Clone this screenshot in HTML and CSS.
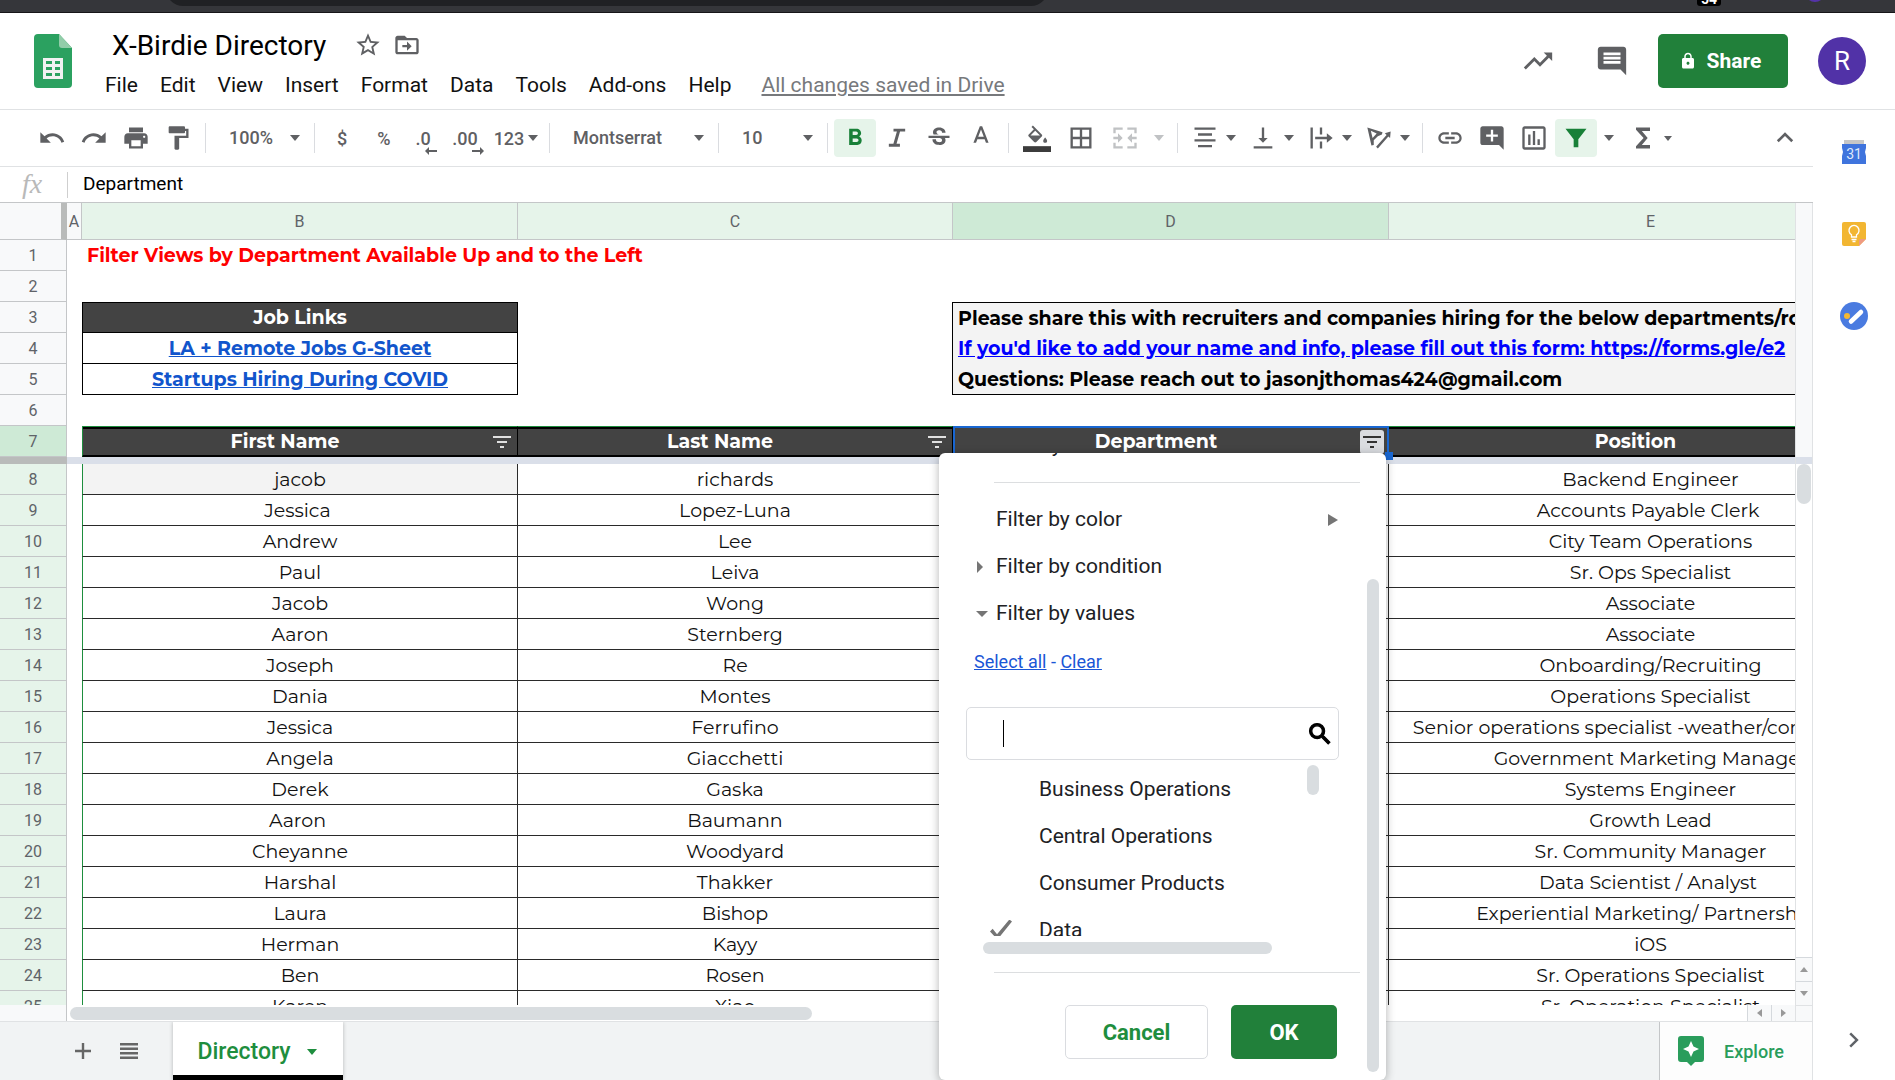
FILE: index.html
```html
<!DOCTYPE html>
<html lang="en">
<head>
    <meta charset="UTF-8">
    <meta name="viewport" content="width=device-width, initial-scale=1.0">
    <title>X-Birdie Directory</title>
    <link rel="stylesheet" href="styles.css">
</head>
<body>
    <div class="browser-strip">
        <div class="omnibox"></div>
        <span class="ext-badge">54</span>
        <span class="profile-dot"></span>
    </div>

    <header>
        <svg class="logo" viewBox="0 0 38 54">
            <path fill="#2ba160" d="M4 0h21l13 14v36a4 4 0 0 1-4 4H4a4 4 0 0 1-4-4V4a4 4 0 0 1 4-4z"/>
            <path fill="#92cda9" d="M25 0l13 14H28a3 3 0 0 1-3-3z"/>
            <path fill="#f1f1f1" fill-rule="evenodd" d="M9 24h20v21H9zM12 27v3h6v-3zM21 27v3h5v-3zM12 33v3h6v-3zM21 33v3h5v-3zM12 39v3h6v-3zM21 39v3h5v-3z"/>
        </svg>
        <div class="doc-info">
            <div class="doc-title">
                <h1>X-Birdie Directory</h1>
                <button aria-label="Star"><svg class="icon-sm" viewBox="0 0 24 24"><path d="M22 9.24l-7.19-.62L12 2 9.19 8.63 2 9.24l5.46 4.73L5.82 21 12 17.27 18.18 21l-1.63-7.03L22 9.24zM12 15.4l-3.76 2.27 1-4.28-3.32-2.88 4.38-.38L12 6.1l1.71 4.04 4.38.38-3.32 2.88 1 4.28L12 15.4z"/></svg></button>
                <button aria-label="Move"><svg class="icon-sm" viewBox="0 0 24 24"><path d="M20 6h-8l-2-2H4c-1.100 0-2 .9-2 2v12c0 1.100.9 2 2 2h16c1.100 0 2-.9 2-2V8c0-1.100-.9-2-2-2zm0 12H4V8h16v10zM12 12H8v2h4v3l4-4-4-4z"/></svg></button>
            </div>
            <div class="menu">
                <a href="#">File</a>
                <a href="#">Edit</a>
                <a href="#">View</a>
                <a href="#">Insert</a>
                <a href="#">Format</a>
                <a href="#">Data</a>
                <a href="#">Tools</a>
                <a href="#">Add-ons</a>
                <a href="#">Help</a>
                <a href="#" class="saved">All changes saved in Drive</a>
            </div>
        </div>
        <div class="header-actions">
            <button aria-label="Activity"><svg class="icon-lg" viewBox="0 0 24 24"><path d="M16 6l2.290 2.290-4.880 4.880-4-4L2 16.590 3.410 18l6-6 4 4 6.300-6.290L22 12V6z"/></svg></button>
            <button aria-label="Comments"><svg class="icon-lg" viewBox="0 0 24 24"><path d="M21.990 4c0-1.100-.890-2-1.990-2H4c-1.100 0-2 .9-2 2v12c0 1.100.9 2 2 2h14l4 4-.010-18zM18 14H6v-2h12v2zm0-3H6V9h12v2zm0-3H6V6h12v2z"/></svg></button>
            <button class="share">
                <svg viewBox="0 0 24 24"><path d="M18 8h-1V6c0-2.760-2.240-5-5-5S7 3.240 7 6v2H6c-1.100 0-2 .9-2 2v10c0 1.100.9 2 2 2h12c1.100 0 2-.9 2-2V10c0-1.100-.9-2-2-2zm-6 9c-1.100 0-2-.9-2-2s.9-2 2-2 2 .9 2 2-.9 2-2 2zm3-9H9V6c0-1.700 1.300-3 3-3s3 1.300 3 3v2z"/></svg>
                Share
            </button>
            <button class="avatar">R</button>
        </div>
    </header>

    <div class="main">
        <div class="editor">
            <div class="toolbar">
                <button class="tool" aria-label="Undo"><svg viewBox="0 0 24 24"><path d="M12.500 8c-2.650 0-5.050.990-6.900 2.600L2 7v9h9l-3.620-3.620c1.390-1.160 3.160-1.880 5.120-1.880 3.540 0 6.550 2.310 7.600 5.500l2.370-.780C21.080 11.030 17.150 8 12.500 8z"/></svg></button>
                <button class="tool" aria-label="Redo"><svg viewBox="0 0 24 24"><path d="M18.400 10.600C16.550 8.990 14.150 8 11.500 8c-4.650 0-8.580 3.030-9.960 7.220L3.900 16c1.050-3.190 4.050-5.500 7.600-5.500 1.950 0 3.730.720 5.120 1.880L13 16h9V7l-3.600 3.600z"/></svg></button>
                <button class="tool" aria-label="Print"><svg viewBox="0 0 24 24"><path d="M19 8H5c-1.660 0-3 1.340-3 3v6h4v4h12v-4h4v-6c0-1.660-1.340-3-3-3zm-3 11H8v-5h8v5zm3-7c-.550 0-1-.450-1-1s.450-1 1-1 1 .450 1 1-.450 1-1 1zm-1-9H6v4h12V3z"/></svg></button>
                <button class="tool" aria-label="Paint format"><svg viewBox="0 0 24 24"><path d="M18 4V3c0-.550-.450-1-1-1H5c-.550 0-1 .450-1 1v4c0 .550.450 1 1 1h12c.550 0 1-.450 1-1V6h1v4H9v11c0 .550.450 1 1 1h2c.550 0 1-.450 1-1v-9h8V4h-3z"/></svg></button>
                <span class="sep"></span>
                <span class="picker">
                    <select aria-label="Zoom"><option>100%</option></select>
                    <i class="caret"></i>
                </span>
                <span class="sep"></span>
                <button class="tool text">$</button>
                <button class="tool text">%</button>
                <button class="tool text decimal">.0<svg viewBox="0 0 12 8"><path d="M4 0v3h8v2H4v3L0 4z"/></svg></button>
                <button class="tool text decimal">.00<svg viewBox="0 0 12 8"><path d="M8 0v3H0v2h8v3l4-4z"/></svg></button>
                <button class="number-format">123<i class="caret"></i></button>
                <span class="sep"></span>
                <span class="picker font">
                    <select aria-label="Font"><option>Montserrat</option></select>
                    <i class="caret"></i>
                </span>
                <span class="sep"></span>
                <span class="picker">
                    <select aria-label="Font size"><option>10</option></select>
                    <i class="caret"></i>
                </span>
                <span class="sep"></span>
                <button class="tool active" aria-label="Bold"><svg viewBox="0 0 24 24"><path d="M15.600 10.790c.970-.670 1.650-1.770 1.650-2.790 0-2.260-1.750-4-4-4H7v14h7.040c2.090 0 3.710-1.700 3.710-3.790 0-1.520-.860-2.820-2.150-3.420zM10 6.500h3c.830 0 1.500.670 1.500 1.500s-.670 1.500-1.500 1.500h-3v-3zm3.500 9H10v-3h3.500c.830 0 1.500.670 1.500 1.500s-.670 1.500-1.500 1.500z"/></svg></button>
                <button class="tool" aria-label="Italic"><svg viewBox="0 0 24 24"><path d="M9 4v2.500h2.900L8.900 17H5v2.500h9.500V17h-2.900l3-10.500H19V4z"/></svg></button>
                <button class="tool" aria-label="Strikethrough"><svg viewBox="0 0 24 24"><path d="M7.240 8.750c-.260-.480-.390-1.030-.390-1.670 0-.610.130-1.160.4-1.670.260-.5.630-.930 1.110-1.290a5.730 5.730 0 0 1 1.700-.830c.660-.190 1.390-.290 2.180-.290.810 0 1.540.110 2.210.340.660.220 1.230.540 1.690.940.470.4.830.880 1.080 1.430.250.550.380 1.150.380 1.810h-3.010c0-.310-.050-.590-.150-.850-.090-.270-.240-.490-.440-.680-.2-.190-.450-.330-.750-.440-.3-.1-.660-.160-1.060-.160-.390 0-.740.040-1.030.130-.290.090-.530.210-.720.360-.190.160-.340.340-.440.550-.1.210-.150.430-.150.660 0 .480.250.880.740 1.210.380.250.770.480 1.410.700H7.390c-.050-.080-.110-.170-.150-.250zM21 12v-2H3v2h9.620c.180.070.4.140.550.200.370.170.660.340.870.510.210.170.350.360.430.570.070.2.110.430.110.690 0 .230-.050.450-.140.660-.090.2-.230.380-.420.530-.190.150-.420.260-.710.350-.290.080-.630.130-1.010.130-.430 0-.830-.040-1.180-.130s-.660-.230-.910-.420a1.920 1.920 0 0 1-.590-.750c-.140-.310-.250-.760-.250-1.210H6.400c0 .550.080 1.130.240 1.580.160.450.370.850.650 1.210.28.350.6.660.98.920.37.260.78.480 1.220.65.440.17.900.3 1.380.39.480.08.960.13 1.440.13.800 0 1.530-.09 2.180-.28s1.210-.45 1.670-.79c.46-.34.82-.77 1.070-1.270s.38-1.070.38-1.710c0-.6-.1-1.140-.31-1.610-.05-.11-.11-.23-.17-.33H21z"/></svg></button>
                <button class="tool" aria-label="Text color"><svg viewBox="0 0 24 24"><path d="M11 2L5.500 16h2.250l1.120-3h6.250l1.120 3h2.250L13 2h-2zm-1.380 9L12 4.670 14.380 11H9.620z"/></svg></button>
                <span class="sep"></span>
                <button class="tool wide" aria-label="Fill color"><svg viewBox="0 0 24 24"><path transform="translate(2 3) scale(.85)" d="M16.560 6.940L7.620-2 6.210-.590l2.380 2.380-5.150 5.150c-.590.590-.590 1.540 0 2.120l5.500 5.500c.290.290.680.440 1.060.440s.770-.150 1.060-.440l5.500-5.500c.590-.580.590-1.530 0-2.120zM5.210 8L10 3.210 14.790 8H5.210zM20 10s-2 2.170-2 3.500c0 1.100.9 2 2 2s2-.9 2-2c0-1.330-2-3.500-2-3.500z"/><path fill="#3c3c3c" d="M0 19h24v5H0z"/></svg></button>
                <button class="tool wide" aria-label="Borders"><svg viewBox="0 0 24 24"><path d="M3 3v18h18V3H3zm8 16H5v-6h6v6zm0-8H5V5h6v6zm8 8h-6v-6h6v6zm0-8h-6V5h6v6z"/></svg></button>
                <button class="tool wide muted" aria-label="Merge cells"><svg viewBox="0 0 24 24"><path d="M2 3h8v2H4v3H2zM14 3h8v5h-2V5h-6zM2 16h2v3h6v2H2zM20 16h2v5h-8v-2h6zM2 11h4V8l4 4-4 4v-3H2zM22 11h-4V8l-4 4 4 4v-3h4z"/></svg></button>
                <button class="more muted" aria-label="Merge type"><i class="caret"></i></button>
                <span class="sep"></span>
                <button class="split" aria-label="Horizontal align"><svg viewBox="0 0 24 24"><path d="M3 3h18v2H3zM6 8h12v2H6zM3 13h18v2H3zM6 18h12v2H6z"/></svg><i class="caret"></i></button>
                <button class="split" aria-label="Vertical align"><svg viewBox="0 0 24 24"><path d="M16 12h-3V3h-2v9H8l4 4 4-4zM4 19v2h16v-2H4z"/></svg><i class="caret"></i></button>
                <button class="split" aria-label="Text wrapping"><svg viewBox="0 0 24 24"><path d="M3 3h2v18H3zM11 3h2v6h-2zM11 15h2v6h-2zM7 11h10V8l5 4-5 4v-3H7z"/></svg><i class="caret"></i></button>
                <button class="split" aria-label="Text rotation"><svg viewBox="0 0 24 24"><path fill-rule="evenodd" d="M2 3l13 4-.500 2-3.500 1.500-3.500 3.500 0 4-2 .500zM5 5.800L6.500 12 10 8.200zM9.500 19.500L18.500 9.500 17 8l5-1.500-.500 5.500-1.500-1.200L11 21z"/></svg><i class="caret"></i></button>
                <span class="sep"></span>
                <button class="tool" aria-label="Insert link"><svg viewBox="0 0 24 24"><path d="M3.900 12c0-1.710 1.390-3.100 3.100-3.100h4V7H7c-2.760 0-5 2.240-5 5s2.240 5 5 5h4v-1.900H7c-1.710 0-3.100-1.390-3.100-3.100zM8 13h8v-2H8v2zm9-6h-4v1.900h4c1.710 0 3.100 1.390 3.100 3.100s-1.390 3.100-3.100 3.100h-4V17h4c2.760 0 5-2.240 5-5s-2.240-5-5-5z"/></svg></button>
                <button class="tool" aria-label="Insert comment"><svg viewBox="0 0 24 24"><path d="M22 4c0-1.100-.9-2-2-2H4c-1.100 0-2 .9-2 2v12c0 1.100.9 2 2 2h14l4 4V4zm-5 7h-4v4h-2v-4H7V9h4V5h2v4h4v2z"/></svg></button>
                <button class="tool" aria-label="Insert chart"><svg viewBox="0 0 24 24"><path d="M20 2H4c-1.100 0-2 .9-2 2v16c0 1.100.9 2 2 2h16c1.100 0 2-.9 2-2V4c0-1.100-.9-2-2-2zm0 18H4V4h16v16zM7 9h2v9H7zM11 6h2v12h-2zM15 13h2v5h-2z"/></svg></button>
                <button class="tool active" aria-label="Filter"><svg viewBox="0 0 24 24"><path d="M3 4h18l-7 9v7h-4v-7z"/></svg></button>
                <button class="more" aria-label="Filter views"><i class="caret"></i></button>
                <button class="split" aria-label="Functions"><svg viewBox="0 0 24 24"><path d="M18 3H6v2l6.500 7L6 19v2h12v-3h-7l5-6-5-6h7z"/></svg><i class="caret small"></i></button>
                <button class="collapse" aria-label="Hide the menus"><svg viewBox="0 0 24 24"><path d="M12 7l-7 7 1.600 1.600L12 10.200l5.400 5.400L19 14z"/></svg></button>
            </div>

            <div class="formula-bar">
                <label for="formula">fx</label>
                <input id="formula" type="text" value="Department">
            </div>

            <div class="sheet-area">
                <div class="viewport">
                    <table>
                        <colgroup>
                            <col class="col-num"><col class="col-a"><col class="col-b"><col class="col-c"><col class="col-d"><col class="col-e">
                        </colgroup>
                        <thead>
                            <tr class="letters"><th class="corner"></th><th class="plain">A</th><th>B</th><th>C</th><th class="current">D</th><th>E</th></tr>
                        </thead>
                        <tbody class="frozen">
                            <tr><th>1</th><td></td><td class="notice" colspan="4">Filter Views by Department Available Up and to the Left</td></tr>
                            <tr><th>2</th><td></td><td></td><td></td><td></td><td></td></tr>
                            <tr><th>3</th><td></td><td class="links-head">Job Links</td><td class="edge"></td><td class="note first" colspan="2">Please share this with recruiters and companies hiring for the below departments/roles</td></tr>
                            <tr><th>4</th><td></td><td class="link-cell"><a href="#">LA + Remote Jobs G-Sheet</a></td><td class="edge"></td><td class="note" colspan="2"><a href="#">If you'd like to add your name and info, please fill out this form: https://forms.gle/e2</a></td></tr>
                            <tr><th>5</th><td></td><td class="link-cell"><a href="#">Startups Hiring During COVID</a></td><td class="edge"></td><td class="note last" colspan="2">Questions: Please reach out to jasonjthomas424@gmail.com</td></tr>
                            <tr><th>6</th><td></td><td></td><td></td><td></td><td></td></tr>
                            <tr class="titles">
                                <th class="current">7</th><td></td>
                                <td class="first"><div>First Name<button aria-label="Filter first name"><svg viewBox="0 0 18 14"><path d="M0 1h18v2H0zM4 6h10v2H4zM7 11h4v2H7z"/></svg></button></div></td>
                                <td><div>Last Name<button aria-label="Filter last name"><svg viewBox="0 0 18 14"><path d="M0 1h18v2H0zM4 6h10v2H4zM7 11h4v2H7z"/></svg></button></div></td>
                                <td class="selected"><div>Department<button aria-label="Filter department"><svg viewBox="0 0 18 14"><path d="M0 1h18v2H0zM4 6h10v2H4zM7 11h4v2H7z"/></svg></button></div></td>
                                <td><div>Position<button aria-label="Filter position"><svg viewBox="0 0 18 14"><path d="M0 1h18v2H0zM4 6h10v2H4zM7 11h4v2H7z"/></svg></button></div></td>
                            </tr>
                            <tr class="freeze"><th></th><td colspan="5"></td></tr>
                        </tbody>
                        <tbody class="people">
                            <tr><th>8</th><td></td><td class="shaded">jacob</td><td>richards</td><td></td><td>Backend Engineer</td></tr>
                            <tr><th>9</th><td></td><td>Jessica&nbsp;</td><td>Lopez-Luna</td><td></td><td>Accounts Payable Clerk&nbsp;</td></tr>
                            <tr><th>10</th><td></td><td>Andrew</td><td>Lee</td><td></td><td>City Team Operations</td></tr>
                            <tr><th>11</th><td></td><td>Paul</td><td>Leiva</td><td></td><td>Sr. Ops Specialist</td></tr>
                            <tr><th>12</th><td></td><td>Jacob</td><td>Wong</td><td></td><td>Associate</td></tr>
                            <tr><th>13</th><td></td><td>Aaron</td><td>Sternberg</td><td></td><td>Associate</td></tr>
                            <tr><th>14</th><td></td><td>Joseph</td><td>Re</td><td></td><td>Onboarding/Recruiting</td></tr>
                            <tr><th>15</th><td></td><td>Dania</td><td>Montes</td><td></td><td>Operations Specialist</td></tr>
                            <tr><th>16</th><td></td><td>Jessica</td><td>Ferrufino</td><td></td><td>Senior operations specialist -weather/construction</td></tr>
                            <tr><th>17</th><td></td><td>Angela</td><td>Giacchetti</td><td></td><td>Government Marketing Manager</td></tr>
                            <tr><th>18</th><td></td><td>Derek</td><td>Gaska</td><td></td><td>Systems Engineer</td></tr>
                            <tr><th>19</th><td></td><td>Aaron&nbsp;</td><td>Baumann</td><td></td><td>Growth Lead</td></tr>
                            <tr><th>20</th><td></td><td>Cheyanne</td><td>Woodyard</td><td></td><td>Sr. Community Manager</td></tr>
                            <tr><th>21</th><td></td><td>Harshal</td><td>Thakker</td><td></td><td>Data Scientist / Analyst&nbsp;</td></tr>
                            <tr><th>22</th><td></td><td>Laura</td><td>Bishop</td><td></td><td>Experiential Marketing/ Partnerships</td></tr>
                            <tr><th>23</th><td></td><td>Herman</td><td>Kayy</td><td></td><td>iOS</td></tr>
                            <tr><th>24</th><td></td><td>Ben</td><td>Rosen</td><td></td><td>Sr. Operations Specialist</td></tr>
                            <tr><th>25</th><td></td><td>Karen</td><td>Xiao</td><td></td><td>Sr. Operation Specialist</td></tr>
                        </tbody>
                    </table>
                </div>
                <div class="vscroll">
                    <div class="vscroll-frozen"></div>
                    <div class="vthumb"></div>
                    <button aria-label="Scroll up"><i class="arrow up"></i></button>
                    <button aria-label="Scroll down"><i class="arrow down"></i></button>
                </div>
                <div class="hscroll">
                    <div class="hscroll-head"></div>
                    <div class="hthumb"></div>
                    <button aria-label="Scroll left"><i class="arrow left"></i></button>
                    <button aria-label="Scroll right"><i class="arrow right"></i></button>
                </div>
                <div class="scroll-corner"></div>
            </div>

            <div class="tabbar">
                <button class="tab-tool" aria-label="Add sheet"><svg viewBox="0 0 24 24"><path d="M20 13.200h-6.800V20h-2.400v-6.800H4v-2.400h6.800V4h2.400v6.800H20z"/></svg></button>
                <button class="tab-tool" aria-label="All sheets"><svg viewBox="0 0 24 24"><path d="M3 4h18v2.500H3zM3 8.500h18V11H3zM3 13h18v2.500H3zM3 17.500h18V20H3z"/></svg></button>
                <button class="tab">Directory<i class="caret"></i></button>
                <button class="explore">
                    <svg viewBox="0 0 26 30"><path d="M3 0h20a3 3 0 0 1 3 3v20a3 3 0 0 1-3 3h-6l-4 4-4-4H3a3 3 0 0 1-3-3V3a3 3 0 0 1 3-3z"/><path fill="#fff" d="M13 5l2.500 5.500L21 13l-5.500 2.500L13 21l-2.500-5.500L5 13l5.500-2.500z"/></svg>
                    Explore
                </button>
            </div>

            <div class="filter-menu">
                <div class="menu-item cut">Sort by color</div>
                <hr>
                <button class="menu-item submenu">Filter by color<i class="arrow right end"></i></button>
                <button class="menu-item"><i class="arrow right lead"></i>Filter by condition</button>
                <button class="menu-item"><i class="arrow down lead"></i>Filter by values</button>
                <p class="quick"><a href="#">Select all</a> - <a href="#">Clear</a></p>
                <div class="search">
                    <input type="text" aria-label="Search values" autofocus>
                    <span class="cursor"></span>
                    <svg viewBox="0 0 24 24"><path stroke="currentColor" d="M15.500 14h-.790l-.280-.270A6.470 6.470 0 0 0 16 9.500 6.500 6.500 0 1 0 9.500 16c1.610 0 3.090-.590 4.230-1.570l.270.280v.790l5 4.990L20.490 19l-4.990-5zm-6 0C7.010 14 5 11.990 5 9.500S7.010 5 9.500 5 14 7.010 14 9.500 11.990 14 9.500 14z"/></svg>
                </div>
                <div class="values">
                    <div class="value-list">
                        <label><input type="checkbox">Business Operations</label>
                        <label><input type="checkbox">Central Operations</label>
                        <label><input type="checkbox">Consumer Products</label>
                        <label><input type="checkbox" checked>Data</label>
                    </div>
                    <div class="values-thumb"></div>
                </div>
                <div class="values-hthumb"></div>
                <hr>
                <div class="menu-actions">
                    <button class="cancel">Cancel</button>
                    <button class="ok">OK</button>
                </div>
                <div class="menu-thumb"></div>
            </div>
        </div>

        <aside>
            <a href="#" aria-label="Calendar"><svg viewBox="0 0 28 28"><path fill="#c6c6c6" d="M4 2h20v5H4z"/><path fill="#3f74dd" d="M2 6h24v4l-1 4 1 4v8H2v-8l1-4-1-4z"/><text x="14" y="21" text-anchor="middle">31</text></svg></a>
            <a href="#" aria-label="Keep"><svg viewBox="0 0 28 28"><path fill="#f2b632" d="M4 2h20a2 2 0 0 1 2 2v15l-7 7H4a2 2 0 0 1-2-2V4a2 2 0 0 1 2-2z"/><path fill="#ee9a83" d="M26 19l-7 7v-5a2 2 0 0 1 2-2z"/><path fill="none" stroke="#fff" stroke-width="1.300" d="M11.500 17v-2.200a5 5 0 1 1 5 0V17zM11.500 19.500h5M12.500 21.500h3"/></svg></a>
            <a href="#" aria-label="Tasks"><svg viewBox="0 0 28 28"><circle cx="14" cy="14" r="14" fill="#4a7be0"/><path stroke="#fff" stroke-width="4.500" stroke-linecap="round" d="M11 19.500L21 10"/><circle cx="7" cy="14" r="3" fill="#f5b731"/></svg></a>
            <button aria-label="Hide side panel"><svg viewBox="0 0 24 24"><path d="M9.500 5.500L8 7l5 5-5 5 1.500 1.500L16 12z"/></svg></button>
        </aside>
    </div>
</body>
</html>
```
FILE: styles.css
```css
:root {
    --green: #1e8e3e;
    --green-dark: #21803a;
    --green-bg: #e6f4ea;
    --green-current: #ceead6;
    --gray-icon: #5f6063;
    --gray-line: #c4c6c8;
    --gray-soft: #e0e2e4;
    --gray-bg: #f8f9fa;
    --thumb: #d9dde0;
    --ink: #202124;
    --cell-dark: #434343;
    --cell-line: #2a2a2a;
    --sheet-font: Montserrat, Inter, sans-serif;
}

* {
    margin: 0;
    padding: 0;
    box-sizing: border-box;
}

body {
    display: flex;
    flex-direction: column;
    height: 100vh;
    overflow: hidden;
    background: white;
    color: var(--ink);
    font-family: Roboto, sans-serif;
    font-size: 21px;
}

button,
input,
select {
    border: none;
    background: none;
    font: inherit;
    color: inherit;
    outline: none;
}

button {
    display: flex;
    align-items: center;
    justify-content: center;
    cursor: pointer;
}

svg {
    display: block;
    flex: none;
    fill: currentColor;
}

/* browser window edge */

.browser-strip {
    display: flex;
    flex: none;
    align-items: flex-end;
    height: 13px;
    padding: 0 70px 6px 166px;
    overflow: hidden;
    background: #35363a;
    border-bottom: 1px solid #161618;
}

.omnibox {
    flex: 1;
    max-width: 882px;
    height: 34px;
    margin-right: auto;
    border-radius: 17px;
    background: #202124;
}

.ext-badge {
    width: 24px;
    height: 20px;
    margin-right: 84px;
    border-radius: 3px;
    background: #000;
    color: white;
    font-size: 14px;
    font-weight: 700;
    line-height: 26px;
    text-align: center;
}

.profile-dot {
    width: 20px;
    height: 20px;
    margin-bottom: 4px;
    border-radius: 50%;
    background: #5433a8;
}

/* title and menus */

header {
    display: flex;
    flex: none;
    align-items: center;
    height: 97px;
    padding: 0 29px 0 34px;
    border-bottom: 1px solid var(--gray-soft);
}

.logo {
    width: 38px;
    height: 54px;
}

.doc-info {
    margin-left: 33px;
    padding-top: 8px;
}

.doc-title {
    display: flex;
    align-items: center;
    gap: 11px;
    height: 40px;
    padding-left: 7px;
}

.doc-title h1 {
    margin-right: 17px;
    color: #000;
    font-size: 28px;
    font-weight: 400;
}

.doc-title button {
    color: var(--gray-icon);
}

.icon-sm {
    width: 28px;
    height: 28px;
}

.icon-lg {
    width: 34px;
    height: 34px;
}

.menu {
    display: flex;
    gap: 22px;
    height: 40px;
    align-items: center;
}

.menu a {
    color: #111;
    text-decoration: none;
}

.menu .saved {
    margin-left: 8px;
    color: #77797c;
    text-decoration: underline;
}

.header-actions {
    display: flex;
    align-items: center;
    margin-left: auto;
    color: var(--gray-icon);
}

.header-actions button {
    margin-left: 40px;
}

.header-actions .share {
    gap: 10px;
    width: 130px;
    height: 54px;
    margin-left: 29px;
    padding-right: 6px;
    border-radius: 5px;
    background: var(--green-dark);
    color: white;
    font-weight: 700;
}

.share svg {
    width: 18px;
    height: 18px;
}

.header-actions .avatar {
    width: 48px;
    height: 48px;
    margin-left: 30px;
    border-radius: 50%;
    background: #5132a7;
    color: white;
    font-size: 26px;
}

.main {
    display: flex;
    flex: 1;
    min-height: 0;
}

.editor {
    position: relative;
    display: flex;
    flex: 1;
    flex-direction: column;
    min-width: 0;
}

/* toolbar */

.toolbar {
    display: flex;
    flex: none;
    align-items: center;
    height: 57px;
    padding: 0 14px 0 31px;
    border-bottom: 1px solid var(--gray-soft);
    color: var(--gray-icon);
}

.toolbar svg {
    width: 28px;
    height: 28px;
}

.sep {
    flex: none;
    width: 1px;
    height: 30px;
    margin: 0 6px;
    background: #dadce0;
}

.tool {
    flex: none;
    width: 42px;
    height: 38px;
    border-radius: 4px;
}

.tool.wide {
    width: 44px;
}

.tool.active {
    background: var(--green-bg);
    color: #188038;
}

.text,
.picker,
.number-format {
    font-size: 18px;
    font-weight: 500;
}

.toolbar .decimal svg {
    width: 12px;
    height: 8px;
    margin: 26px 0 0 -6px;
}

.muted {
    color: #c0c2c4;
}

.picker {
    position: relative;
    display: flex;
    flex: none;
    align-items: center;
    width: 96px;
    height: 38px;
}

.picker.font {
    width: 156px;
}

.picker select {
    width: 100%;
    height: 100%;
    padding: 0 0 2px 17px;
    appearance: none;
}

.picker .caret {
    position: absolute;
    right: 8px;
}

.number-format {
    gap: 4px;
    width: 54px;
}

.caret {
    flex: none;
    border: 5px solid transparent;
    border-top: 6px solid currentColor;
    border-bottom: none;
}

.caret.small {
    border-width: 5px 4px 0;
}

.more {
    flex: none;
    width: 24px;
    height: 38px;
}

.split {
    flex: none;
    gap: 7px;
    width: 58px;
    height: 38px;
}

.collapse {
    margin-left: auto;
}

/* formula bar */

.formula-bar {
    display: flex;
    flex: none;
    align-items: center;
    height: 36px;
    border-bottom: 1px solid var(--gray-line);
}

.formula-bar label {
    width: 68px;
    height: 26px;
    padding-left: 22px;
    border-right: 1px solid #cfcfcf;
    color: #b9b9b9;
    font: italic 28px/24px "Liberation Serif", serif;
}

.formula-bar input {
    flex: 1;
    padding: 0 0 2px 15px;
    color: #000;
    font-size: 19px;
}

/* sheet */

.sheet-area {
    display: grid;
    flex: 1;
    grid-template: minmax(0, 1fr) 16px / minmax(0, 1fr) 18px;
    min-height: 0;
}

.viewport {
    overflow: hidden;
}

table {
    width: 1913px;
    table-layout: fixed;
    border-collapse: separate;
    border-spacing: 0;
}

.col-num {
    width: 67px;
}

.col-a {
    width: 15px;
}

.col-b,
.col-d {
    width: 436px;
}

.col-c {
    width: 435px;
}

.col-e {
    width: 524px;
}

tr {
    height: 31px;
}

th {
    background: var(--gray-bg);
    border-right: 1px solid var(--gray-line);
    border-bottom: 1px solid var(--gray-line);
    color: #5f6368;
    font-size: 16px;
    font-weight: 400;
}

td {
    height: 31px;
    padding-top: 1px;
    overflow: hidden;
    font-family: var(--sheet-font);
    font-size: 19px;
    line-height: 28px;
    text-align: center;
    white-space: nowrap;
}

.letters {
    height: 37px;
}

.letters th {
    background: var(--green-bg);
}

.letters th.corner {
    background: var(--gray-bg);
    border-right: 6px solid #b9bbba;
}

.letters th.plain {
    background: var(--gray-bg);
}

th.current,
.letters th.current {
    background: var(--green-current);
}

.frozen td {
    font-weight: 700;
}

.frozen .notice {
    padding-left: 5px;
    color: #ff0000;
    text-align: left;
}

.links-head,
.link-cell {
    border: 1px solid #000;
    border-top: none;
}

.links-head {
    background: var(--cell-dark);
    border-top: 1px solid #000;
    color: white;
}

.link-cell a {
    color: #1155cc;
}

.edge {
    border-right: 1px solid #000;
}

.frozen .note {
    padding-left: 5px;
    background: #f3f3f3;
    color: #000;
    text-align: left;
}

.note.first {
    border-top: 1px solid #000;
}

.note.last {
    border-bottom: 1px solid #000;
}

.note a {
    color: #0000ff;
}

.titles td + td {
    padding: 0;
    background: var(--cell-dark);
    border-top: 1px solid var(--green);
    border-right: 1px solid #000;
    border-bottom: 2px solid #000;
    box-shadow: inset 0 2px 0 #000;
    color: white;
}

.titles .first {
    border-left: 1px solid var(--green);
}

.titles td.selected {
    position: relative;
    overflow: visible;
    border: 2px solid #1967d2;
    box-shadow: none;
}

/* fill handle of the selected cell */
.selected::after {
    content: '';
    position: absolute;
    right: -6px;
    bottom: -5px;
    width: 8px;
    height: 8px;
    background: #1967d2;
}

.titles td div {
    display: grid;
    grid-template-columns: 1fr 30px;
    align-items: center;
    height: 27px;
}

.titles button {
    justify-self: center;
    width: 24px;
    height: 24px;
    border-radius: 3px;
    color: #e0e0e0;
}

.titles svg {
    width: 18px;
    height: 14px;
}

.titles .selected button {
    background: #dadce0;
    color: #333;
}

tr.freeze,
.freeze th,
.freeze td {
    height: 7px;
    padding: 0;
    border: none;
    font-size: 0;
    line-height: 0;
}

.freeze th {
    background: #b9bbba;
}

.freeze td {
    background: #dadfe9;
}

.people th {
    background: var(--green-bg);
}

.people td {
    color: #111;
}

.people td + td {
    border-right: 1px solid var(--cell-line);
    border-bottom: 1px solid var(--cell-line);
}

.people td:nth-child(3) {
    border-left: 1px solid var(--green);
}

.people .shaded {
    background: #f3f3f3;
}

/* sheet scrollbars */

.vscroll {
    display: flex;
    flex-direction: column;
    border: 1px solid var(--gray-soft);
    border-width: 0 1px;
}

.vscroll-frozen {
    height: 261px;
    background: var(--gray-bg);
    border-bottom: 7px solid #dadfe9;
}

.vthumb {
    height: 40px;
    margin: 0 1px auto;
    border-radius: 7px;
    background: var(--thumb);
}

.vscroll button {
    height: 24px;
    background: var(--gray-bg);
    border-top: 1px solid #d5d9dd;
}

.hscroll {
    display: flex;
}

.hscroll-head {
    width: 67px;
    background: var(--gray-bg);
    border-right: 1px solid var(--gray-line);
}

.hthumb {
    width: 742px;
    height: 13px;
    margin: 2px auto 0 3px;
    border-radius: 7px;
    background: var(--thumb);
}

.hscroll button {
    width: 24px;
    background: var(--gray-bg);
    border-left: 1px solid #d5d9dd;
}

.scroll-corner {
    background: var(--gray-bg);
    border: 1px solid var(--gray-soft);
    border-bottom: none;
}

.arrow {
    flex: none;
    border: 4px solid transparent;
    color: #999;
}

.arrow.up {
    border-bottom: 5px solid currentColor;
    border-top: none;
}

.arrow.down {
    border-top: 5px solid currentColor;
    border-bottom: none;
}

.arrow.left {
    border-right: 5px solid currentColor;
    border-left: none;
}

.arrow.right {
    border-left: 5px solid currentColor;
    border-right: none;
}

/* sheet tabs */

.tabbar {
    display: flex;
    flex: none;
    height: 59px;
    padding-left: 60px;
    background: #f1f3f4;
    border-top: 1px solid var(--gray-soft);
}

.tab-tool {
    width: 46px;
    color: #666;
}

.tab-tool svg {
    width: 24px;
    height: 24px;
}

.tab {
    gap: 16px;
    width: 170px;
    margin-left: 21px;
    padding: 6px 2px 0 0;
    background: white;
    border-bottom: 5px solid #000;
    box-shadow: 0 0 4px rgba(0, 0, 0, 0.25);
    clip-path: inset(0 -4px);
    color: var(--green);
    font-size: 23px;
    font-weight: 500;
}

.explore {
    gap: 20px;
    width: 154px;
    margin-left: auto;
    padding-right: 10px;
    background: #fdfdfd;
    border-left: 1px solid var(--gray-line);
    border-right: 1px solid var(--gray-soft);
    color: #2a9d5c;
    font-size: 18px;
    font-weight: 500;
}

.explore svg {
    width: 26px;
    height: 30px;
}

/* filter menu, opened under the Department column */

.filter-menu {
    position: absolute;
    top: 343px;
    bottom: 0;
    left: 939px;
    z-index: 10;
    width: 447px;
    overflow: hidden;
    background: white;
    border-radius: 6px;
    box-shadow: 0 2px 10px rgba(0, 0, 0, 0.3);
}

.filter-menu hr {
    margin: 0 26px 0 55px;
    border: none;
    border-top: 1px solid #dcdee0;
}

.menu-item {
    justify-content: flex-start;
    width: 100%;
    height: 47px;
    padding: 0 48px 0 37px;
    line-height: 47px;
}

.menu-item.cut {
    margin: -31px 0 13px;
    padding-left: 57px;
}

.menu-item.submenu {
    margin-top: 13px;
    padding-left: 57px;
}

.menu-item .arrow {
    border-width: 6px;
    color: #757575;
}

.menu-item .arrow.end {
    margin-left: auto;
    border-left-width: 10px;
}

.menu-item .lead.right {
    margin: 0 13px 0 1px;
}

.menu-item .lead.down {
    margin-right: 8px;
}

.menu-item .arrow.right {
    border-right: none;
}

.menu-item .arrow.down {
    border-bottom: none;
}

.quick {
    margin: 13px 0 33px 35px;
    font-size: 18px;
    line-height: 24px;
    color: #1a56d6;
}

.quick a {
    color: #1a56d6;
}

.search {
    display: flex;
    align-items: center;
    width: 373px;
    height: 53px;
    margin-left: 27px;
    padding: 0 4px 0 36px;
    border: 1px solid #dadce0;
    border-radius: 5px;
    color: #000;
}

.search input {
    order: 1;
    flex: 1;
    min-width: 0;
    height: 100%;
    caret-color: transparent;
}

.cursor {
    width: 1px;
    height: 27px;
    background: #000;
}

.search svg {
    order: 2;
    width: 28px;
    height: 28px;
}

.values {
    display: flex;
    height: 171px;
    margin-top: 5px;
    overflow: hidden;
}

.value-list {
    flex: 1;
}

.value-list label {
    display: flex;
    align-items: center;
    height: 47px;
    padding-left: 51px;
}

.value-list input {
    width: 22px;
    height: 20px;
    margin-right: 27px;
    appearance: none;
}

.value-list input:checked {
    background: #757575;
    clip-path: polygon(0 60%, 12% 46%, 32% 74%, 88% 0, 100% 10%, 34% 100%);
}

.values-thumb {
    width: 12px;
    height: 30px;
    margin-right: 67px;
    border-radius: 6px;
    background: var(--thumb);
}

.values-hthumb {
    width: 289px;
    height: 12px;
    margin: 6px 0 18px 44px;
    border-radius: 6px;
    background: var(--thumb);
}

.menu-actions {
    display: flex;
    justify-content: flex-end;
    gap: 23px;
    margin: 32px 49px 0 0;
}

.menu-actions button {
    height: 54px;
    border-radius: 5px;
    font-size: 22px;
    font-weight: 700;
}

.menu-actions .cancel {
    width: 143px;
    border: 1px solid #dadce0;
    color: var(--green);
}

.menu-actions .ok {
    width: 106px;
    background: var(--green-dark);
    color: white;
}

.menu-thumb {
    position: absolute;
    top: 126px;
    right: 7px;
    bottom: 8px;
    width: 12px;
    border-radius: 6px;
    background: var(--thumb);
}

/* side panel */

aside {
    display: flex;
    flex: none;
    flex-direction: column;
    align-items: center;
    gap: 54px;
    width: 82px;
    padding: 28px 0 26px;
    color: #5f6368;
}

aside svg {
    width: 28px;
    height: 28px;
}

aside text {
    fill: #dfe9fb;
    font: 14px Roboto, sans-serif;
}

aside button {
    margin-top: auto;
}
```
